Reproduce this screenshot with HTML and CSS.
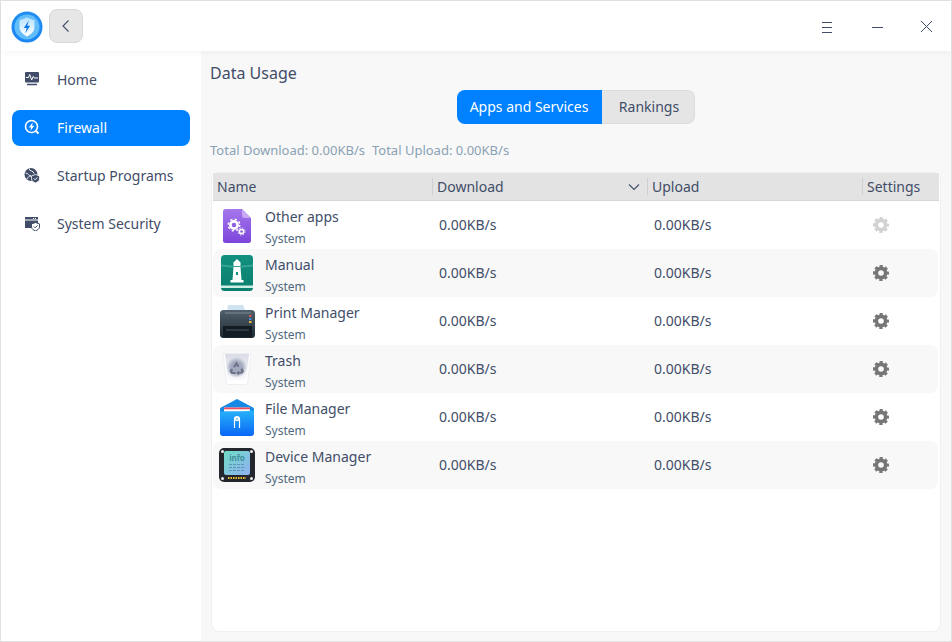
FILE: index.html
```html
<!DOCTYPE html>
<html lang="en">
<head>
<meta charset="utf-8">
<title>Firewall</title>
<link rel="stylesheet" href="styles.css">
</head>
<body>
<div class="window">
  <header class="titlebar">
    <svg class="logo" width="32" height="32" viewBox="0 0 32 32">
      <defs>
        <linearGradient id="lg1" x1="0" y1="0" x2="0" y2="1"><stop offset="0" stop-color="#1f8ff0"/><stop offset="1" stop-color="#1b86f2"/></linearGradient>
        <linearGradient id="lg2" x1="0" y1="0" x2="0" y2="1"><stop offset="0" stop-color="#b6e2ff"/><stop offset="1" stop-color="#ffffff"/></linearGradient>
      </defs>
      <circle cx="16" cy="16" r="15.500" fill="url(#lg1)"/>
      <circle cx="16" cy="16" r="12.500" fill="#62bdf8"/>
      <path d="M16 6.500l7.500 2.700v6.800c0 4.700-3.700 7.600-7.500 9.400-3.800-1.800-7.500-4.700-7.500-9.400V9.200z" fill="url(#lg2)"/>
      <path d="M17.800 9.500l-5 7.500h2.900l-1.500 5.500 5-7.700h-2.900z" fill="#1079e6"/>
    </svg>
    <button class="back-btn" type="button" aria-label="Back">
      <svg width="10" height="12" viewBox="0 0 10 12"><path d="M7.500 .5L2 6l5.500 5.500" fill="none" stroke="#414d68" stroke-width="1.100"/></svg>
    </button>
    <div class="win-controls">
      <svg class="win-ico" width="50" height="50" viewBox="0 0 50 50"><path d="M21 21.500h10M21 26.500h10M21 31.500h10" stroke="#414d68" fill="none"/></svg>
      <svg class="win-ico" width="50" height="50" viewBox="0 0 50 50"><path d="M21 26.500h11" stroke="#414d68" fill="none"/></svg>
      <svg class="win-ico" width="50" height="50" viewBox="0 0 50 50"><path d="M20 20l11 11M31 20l-11 11" stroke="#414d68" fill="none"/></svg>
    </div>
  </header>
  <div class="body">
    <nav class="sidebar">
      <a class="nav-item">
        <svg class="nav-ico" width="16" height="16" viewBox="0 0 16 16"><path d="M2 1h12a1 1 0 0 1 1 1v8.500a1 1 0 0 1-1 1H2a1 1 0 0 1-1-1V2a1 1 0 0 1 1-1z" fill="#414d68"/><path d="M3 13.500h10" stroke="#414d68" stroke-width="1.500"/><path d="M2 6.500h2.500l1.200-3 2 5.500 1.500-3.500 1 1.500H14" fill="none" stroke="#fff" stroke-width="1"/></svg>
        <span>Home</span>
      </a>
      <a class="nav-item active">
        <svg class="nav-ico" width="16" height="16" viewBox="0 0 16 16"><circle cx="7.500" cy="7.500" r="6" fill="none" stroke="#fff" stroke-width="1.600"/><path d="M12 12l2.500 2.500" stroke="#fff" stroke-width="2"/><path d="M8.800 3.200L4.800 8.500h2.400L6.200 12 10.500 6.700H8z" fill="#fff"/></svg>
        <span>Firewall</span>
      </a>
      <a class="nav-item">
        <svg class="nav-ico" width="16" height="16" viewBox="0 0 16 16"><circle cx="7" cy="7.500" r="6.500" fill="#414d68"/><path d="M1.500 6c3 0 3 3 5.500 3M5 1.500c0 3 5 2 5 5M3 12c1-2 2-3 4-3" fill="none" stroke="#fff" stroke-width=".9"/><path d="M11.500 7.500l4 1.400v3c0 2-2 3.300-4 4-2-.7-4-2-4-4v-3z" fill="#414d68" stroke="#fff" stroke-width=".8"/><path d="M9.700 11.300l1.500 1.500 2.200-2.400" fill="none" stroke="#fff"/></svg>
        <span>Startup Programs</span>
      </a>
      <a class="nav-item">
        <svg class="nav-ico" width="16" height="16" viewBox="0 0 16 16"><path d="M1 2h13v11H1z" fill="#414d68"/><path d="M1 5h13" stroke="#fff"/><path d="M9 3.500h4" stroke="#fff" stroke-dasharray="1 1"/><path d="M11.500 7.500l4 1.400v3c0 2-2 3.300-4 4-2-.7-4-2-4-4v-3z" fill="#fff" stroke="#414d68"/><path d="M9.700 11.300l1.500 1.500 2.200-2.400" fill="none" stroke="#414d68"/></svg>
        <span>System Security</span>
      </a>
    </nav>
    <main class="content">
      <h1 class="page-title">Data Usage</h1>
      <div class="tabs-wrap">
        <div class="tabs">
          <button class="tab tab-on" type="button">Apps and Services</button>
          <button class="tab" type="button">Rankings</button>
        </div>
      </div>
      <p class="totals"><span>Total Download: 0.00KB/s</span><span>Total Upload: 0.00KB/s</span></p>
      <section class="card">
        <div class="thead">
          <div class="th">Name</div>
          <div class="th th-sep th-sort">Download
            <svg width="12" height="8" viewBox="0 0 12 8"><path d="M1 1.500l5 5 5-5" fill="none" stroke="#414d68" stroke-width="1.100"/></svg>
          </div>
          <div class="th th-sep">Upload</div>
          <div class="th th-sep">Settings</div>
        </div>

        <div class="row">
          <div class="app">
            <div class="icon-slot icon-low">
              <svg width="28" height="34" viewBox="0 0 28 34">
                <defs><linearGradient id="g-o" x1="0" y1="0" x2="0" y2="1"><stop offset="0" stop-color="#a677ec"/><stop offset="1" stop-color="#7b45da"/></linearGradient></defs>
                <path d="M2.500 0H19l9 9v22.500a2.500 2.500 0 0 1-2.500 2.500h-23A2.500 2.500 0 0 1 0 31.500v-29A2.500 2.500 0 0 1 2.500 0z" fill="url(#g-o)"/>
                <path d="M19 0l9 9h-6.500A2.500 2.500 0 0 1 19 6.500z" fill="#c8a8f4"/>
                <circle cx="11" cy="16" r="3.600" fill="none" stroke="#fff" stroke-width="2.600"/>
                <circle cx="11" cy="16" r="5.800" fill="none" stroke="#fff" stroke-width="1.400" stroke-dasharray="2.200 2.350"/>
                <circle cx="18.500" cy="22.500" r="2.100" fill="none" stroke="#fff" stroke-width="1.500"/>
                <circle cx="18.500" cy="22.500" r="3.500" fill="none" stroke="#fff" stroke-width="1" stroke-dasharray="1.400 1.350"/>
              </svg>
            </div>
            <div class="app-text"><div class="app-name">Other apps</div><div class="app-sub">System</div></div>
          </div>
          <div class="val">0.00KB/s</div>
          <div class="val">0.00KB/s</div>
          <div class="gear-cell gear-off"><svg width="16" height="16" viewBox="0 0 16 16"><use href="#gear"/></svg></div>
        </div>

        <div class="row alt">
          <div class="app">
            <div class="icon-slot">
              <svg width="32" height="36" viewBox="0 0 32 36">
                <defs><linearGradient id="g-m" x1="0" y1="0" x2="0" y2="1"><stop offset="0" stop-color="#12907f"/><stop offset="1" stop-color="#0a7f6e"/></linearGradient></defs>
                <rect width="32" height="36" rx="3.500" fill="url(#g-m)"/>
                <path d="M0 30.500h32V33H0z" fill="#cfeee6"/>
                <path d="M0 9.500l16 1.500 16-1.500v2L16 13 0 11.500z" fill="#52b5a7" opacity=".6"/>
                <path d="M16 4l3.500 3.500V11h-7V7.500z" fill="#fff"/>
                <path d="M12.500 12h7l1 13h-9z" fill="#fff"/>
                <path d="M9.500 25h13v2.500h-13z" fill="#fff"/>
                <path d="M15 17h2v3h-2z" fill="#0f8f80"/>
              </svg>
            </div>
            <div class="app-text"><div class="app-name">Manual</div><div class="app-sub">System</div></div>
          </div>
          <div class="val">0.00KB/s</div>
          <div class="val">0.00KB/s</div>
          <div class="gear-cell"><svg width="16" height="16" viewBox="0 0 16 16"><use href="#gear"/></svg></div>
        </div>

        <div class="row">
          <div class="app">
            <div class="icon-slot">
              <svg width="35" height="33" viewBox="0 0 35 33">
                <defs><linearGradient id="g-p" x1="0" y1="0" x2="0" y2="1"><stop offset="0" stop-color="#51606c"/><stop offset="1" stop-color="#1c2932"/></linearGradient></defs>
                <path d="M8 0h15l3 7H7z" fill="#cfe3f0"/>
                <rect y="5" width="35" height="28" rx="3.500" fill="url(#g-p)"/>
                <path d="M5 8h26" stroke="#7b8a95" stroke-width="1"/>
                <path d="M3 21h29v11H3z" fill="#121c22"/>
                <path d="M6 24h23v2H6z" fill="#2c3943"/>
                <path d="M29 10h2.500v2H29z" fill="#d9534f"/>
                <path d="M29 13h2.500v2H29z" fill="#3b8fdc"/>
                <path d="M29 16h2.500v2H29z" fill="#e8b93c"/>
              </svg>
            </div>
            <div class="app-text"><div class="app-name">Print Manager</div><div class="app-sub">System</div></div>
          </div>
          <div class="val">0.00KB/s</div>
          <div class="val">0.00KB/s</div>
          <div class="gear-cell"><svg width="16" height="16" viewBox="0 0 16 16"><use href="#gear"/></svg></div>
        </div>

        <div class="row alt">
          <div class="app">
            <div class="icon-slot">
              <svg width="30" height="32" viewBox="0 0 30 32">
                <defs>
                  <linearGradient id="g-t" x1="0" y1="0" x2="0" y2="1"><stop offset="0" stop-color="#d9dce6"/><stop offset="1" stop-color="#fbfbfd"/></linearGradient>
                  <radialGradient id="g-h"><stop offset=".55" stop-color="#a3a9be"/><stop offset="1" stop-color="#a3a9be" stop-opacity="0"/></radialGradient>
                </defs>
                <path d="M1 .5h28l-3.300 29a2 2 0 0 1-2 2H6.300a2 2 0 0 1-2-2z" fill="#fff" stroke="#eceef2"/>
                <path d="M3 1h24l-2.700 24a3 3 0 0 1-3 2.500H8.700a3 3 0 0 1-3-2.500z" fill="url(#g-t)"/>
                <circle cx="14.500" cy="14.500" r="10.500" fill="url(#g-h)"/>
                <path d="M14.500 8.500l3 4.800-1.800 1-1.200-2.100-1.600 2.600-1.900-1zM20.500 15l1.500 3.500-2 2.300h-3v1.700L14.300 20l2.700-2.500v1.500h2.200l-.7-2.800zM9 15.500l2 1-.8 2.500h3.300v2H9.500L7.500 18.500z" fill="#6d7488"/>
              </svg>
            </div>
            <div class="app-text"><div class="app-name">Trash</div><div class="app-sub">System</div></div>
          </div>
          <div class="val">0.00KB/s</div>
          <div class="val">0.00KB/s</div>
          <div class="gear-cell"><svg width="16" height="16" viewBox="0 0 16 16"><use href="#gear"/></svg></div>
        </div>

        <div class="row">
          <div class="app">
            <div class="icon-slot">
              <svg width="36" height="37" viewBox="0 0 36 37">
                <defs><linearGradient id="g-f" x1="0" y1="0" x2="0" y2="1"><stop offset="0" stop-color="#27b2fa"/><stop offset="1" stop-color="#0a66f5"/></linearGradient></defs>
                <path d="M18 0l16 8.500a2 2 0 0 1 1 2V14H1v-3.500a2 2 0 0 1 1-2z" fill="#1689e6"/>
                <path d="M5 8.500h26v4H5z" fill="#fff"/>
                <path d="M5 8.500h26v1.800H5z" fill="#ee4d5f"/>
                <path d="M1 12.500q17 1 34 -1V34a3 3 0 0 1-3 3H4a3 3 0 0 1-3-3z" fill="url(#g-f)"/>
                <path d="M15.500 29v-9a2.500 2.500 0 0 1 5 0v9" fill="none" stroke="#fff" stroke-width="1.200"/>
                <circle cx="18" cy="20" r="2.300" fill="#fff"/>
                <circle cx="18" cy="20" r=".8" fill="#1b8ee8"/>
              </svg>
            </div>
            <div class="app-text"><div class="app-name">File Manager</div><div class="app-sub">System</div></div>
          </div>
          <div class="val">0.00KB/s</div>
          <div class="val">0.00KB/s</div>
          <div class="gear-cell"><svg width="16" height="16" viewBox="0 0 16 16"><use href="#gear"/></svg></div>
        </div>

        <div class="row alt">
          <div class="app">
            <div class="icon-slot">
              <svg width="36" height="34" viewBox="0 0 36 34">
                <defs><linearGradient id="g-d" x1="0" y1="0" x2="1" y2="1"><stop offset="0" stop-color="#6fdcc6"/><stop offset="1" stop-color="#8fb0f2"/></linearGradient></defs>
                <rect width="36" height="34" rx="5" fill="#23262c"/>
                <rect x="5" y="3" width="26" height="24" rx="2" fill="url(#g-d)"/>
                <text class="info" x="18" y="12.500" text-anchor="middle">info</text>
                <path d="M10 16.500h16M10 19.500h16M10 22.500h16" stroke="#5f93b5" stroke-width="1" stroke-dasharray="3 1"/>
                <path d="M9 30h18" stroke="#f0c030" stroke-width="2" stroke-dasharray="1.500 1"/>
                <circle cx="3.500" cy="3.500" r="1.500" fill="#eee"/><circle cx="32.500" cy="3.500" r="1.500" fill="#eee"/>
                <circle cx="3.500" cy="30.500" r="1.500" fill="#eee"/><circle cx="32.500" cy="30.500" r="1.500" fill="#eee"/>
              </svg>
            </div>
            <div class="app-text"><div class="app-name">Device Manager</div><div class="app-sub">System</div></div>
          </div>
          <div class="val">0.00KB/s</div>
          <div class="val">0.00KB/s</div>
          <div class="gear-cell"><svg width="16" height="16" viewBox="0 0 16 16"><use href="#gear"/></svg></div>
        </div>
      </section>
    </main>
  </div>
</div>
<svg class="defs" width="0" height="0" aria-hidden="true">
  <symbol id="gear" viewBox="0 0 16 16">
    <circle cx="8" cy="8" r="4.600" fill="none" stroke="currentColor" stroke-width="3.600"/>
    <circle cx="8" cy="8" r="6.700" fill="none" stroke="currentColor" stroke-width="2.600" stroke-dasharray="3.200 2.063" stroke-dashoffset="1.600"/>
  </symbol>
</svg>
</body>
</html>
```

FILE: styles.css
```css
* { box-sizing: border-box; }
html, body { margin: 0; padding: 0; height: 100%; }
body {
  font-family: "Noto Sans", sans-serif;
  font-size: 14px;
  color: #414d68;
  background: #fff;
  overflow: hidden;
}
.window {
  width: 952px;
  height: 642px;
  border: 1px solid #e2e2e2;
  display: flex;
  flex-direction: column;
  background: #fff;
}
.titlebar {
  height: 50px;
  flex: none;
  display: flex;
  align-items: center;
  padding-left: 10px;
  background: #fff;
  position: relative;
  z-index: 2;
  box-shadow: 0 2px 6px rgba(0, 0, 0, 0.04);
}
.logo { display: block; margin-top: 1px; }
.back-btn {
  width: 34px;
  height: 34px;
  margin-left: 6px;
  padding: 0;
  border: 1px solid #d8d8d8;
  border-radius: 8px;
  background: #e6e6e6;
  display: flex;
  align-items: center;
  justify-content: center;
}
.win-controls { margin-left: auto; display: flex; }
.win-ico { display: block; }
.body { flex: 1; display: flex; min-height: 0; }
.sidebar {
  width: 200px;
  flex: none;
  padding: 11px 11px 0;
  display: flex;
  flex-direction: column;
  background: #fff;
}
.nav-item {
  height: 36px;
  margin-bottom: 12px;
  padding-left: 12px;
  padding-bottom: 2px;
  border-radius: 8px;
  display: flex;
  align-items: center;
  gap: 17px;
  color: #414d68;
}
.nav-ico { flex: none; }
.nav-item.active { background: #0081ff; color: #fff; }
.content {
  flex: 1;
  min-width: 0;
  background: #f8f8f8;
  padding: 9px 10px 9px 9px;
  display: flex;
  flex-direction: column;
}
.page-title {
  margin: 0;
  font-size: 16px;
  font-weight: 400;
  line-height: 26px;
  color: #414d68;
}
.tabs-wrap { display: flex; justify-content: center; margin-top: 4px; padding-left: 1px; }
.tabs { display: flex; height: 34px; }
.tab {
  font: inherit;
  width: 93px;
  height: 34px;
  padding: 0 0 2px 2px;
  border: 1px solid #dcdcdc;
  border-left: 0;
  background: #e5e5e5;
  color: #414d68;
  border-radius: 0 8px 8px 0;
}
.tab-on {
  width: 145px;
  padding: 0 1px 2px 0;
  background: #0081ff;
  color: #fff;
  border: 0;
  border-radius: 8px 0 0 8px;
}
.totals {
  margin: 16px 0 0;
  font-size: 13px;
  line-height: 20px;
  color: #8aa1b4;
  display: flex;
  gap: 7px;
}
.card {
  flex: 1;
  margin-top: 12px;
  margin-left: 1px;
  background: #fff;
  border: 1px solid #f0f0f0;
  border-radius: 8px;
  padding: 0 1px;
  width: 730px;
}
.thead {
  display: grid;
  grid-template-columns: 219px 215px 215px 77px;
  height: 28px;
  background: #e3e3e3;
  border-bottom: 1px solid #d6d6d6;
  align-items: center;
}
.th { padding-left: 4px; height: 17px; line-height: 17px; }
.th-sep { border-left: 1px solid #cfcfcf; }
.th-sort { display: flex; justify-content: space-between; align-items: center; padding-right: 7px; }
.row {
  display: grid;
  grid-template-columns: 220px 215px 215px 76px;
  height: 48px;
  align-items: center;
  border-radius: 8px;
  width: 725px;
}
.row.alt { background: #f8f8f8; }
.app { display: flex; align-items: center; height: 48px; }
.icon-slot { flex: none; width: 48px; display: flex; justify-content: center; align-items: center; }
.icon-slot svg { display: block; }
.icon-low { padding-top: 2px; }
.app-text { margin-left: 4px; padding-top: 5px; }
.app-name { line-height: 22px; }
.app-sub { font-size: 12px; line-height: 22px; color: #526a7f; }
.val { padding-left: 6px; padding-bottom: 2px; }
.gear-cell { display: flex; justify-content: center; padding-right: 40px; color: #767676; }
.gear-cell svg { display: block; }
.gear-off { color: #d2d2d2; }
.defs { position: absolute; }
.info { font: 700 8px "Noto Sans", sans-serif; fill: #3e8f9a; }
```
